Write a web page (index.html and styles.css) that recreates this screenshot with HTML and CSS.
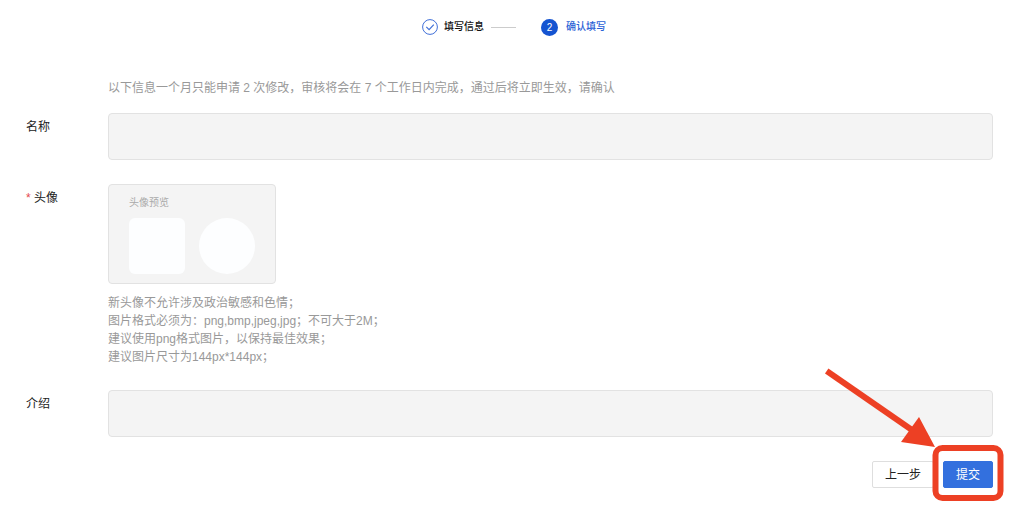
FILE: index.html
```html
<!DOCTYPE html>
<html lang="zh-CN">
<head>
<meta charset="utf-8">
<meta name="viewport" content="width=device-width, initial-scale=1">
<title>确认填写</title>
<link rel="stylesheet" href="styles.css">
</head>
<body>
<main class="page">
  <ol class="steps">
    <li class="step">
      <svg class="step-icon" viewBox="0 0 16 16" aria-hidden="true">
        <circle cx="8" cy="8" r="7.4" fill="#fff" stroke="#3f6fd8" stroke-width="1"/>
        <path d="M4.3 7.9 7.1 10.6 11.8 5.6" fill="none" stroke="#3f6fd8" stroke-width="1.2"/>
      </svg>
      <span>填写信息</span>
    </li>
    <li class="step-line" aria-hidden="true"></li>
    <li class="step step-active" aria-current="step">
      <span class="step-number">2</span>
      <span>确认填写</span>
    </li>
  </ol>

  <form class="form">
    <p class="notice">以下信息一个月只能申请 2 次修改，审核将会在 7 个工作日内完成，通过后将立即生效，请确认</p>

    <div class="row">
      <label class="label" for="name">名称</label>
      <input class="field" id="name" type="text" readonly>
    </div>

    <div class="row">
      <div class="label"><span class="required">*</span> 头像</div>
      <div>
        <div class="preview">
          <div class="preview-title">头像预览</div>
          <div class="preview-shapes">
            <div class="avatar"></div>
            <div class="avatar avatar-round"></div>
          </div>
        </div>
        <div class="hints">
          <p>新头像不允许涉及政治敏感和色情；</p>
          <p>图片格式必须为：png,bmp,jpeg,jpg；不可大于2M；</p>
          <p>建议使用png格式图片，以保持最佳效果；</p>
          <p>建议图片尺寸为144px*144px；</p>
        </div>
      </div>
    </div>

    <div class="row">
      <label class="label" for="intro">介绍</label>
      <input class="field" id="intro" type="text" readonly>
    </div>

    <div class="actions">
      <button class="button" type="button">上一步</button>
      <button class="button button-primary" type="submit">提交</button>
      <svg class="callout" viewBox="0 0 185 140" aria-hidden="true">
        <path d="M6.7 6 92 65" fill="none" stroke="#ed4024" stroke-width="6"/>
        <path d="M99 52 81 77 115 82Z" fill="#ed4024"/>
        <rect x="115.5" y="83" width="65" height="50" rx="7" fill="none" stroke="#ed4024" stroke-width="6"/>
      </svg>
    </div>
  </form>
</main>
</body>
</html>
```
FILE: styles.css
```css
* {
  box-sizing: border-box;
}

body {
  margin: 0;
  background: #fff;
  color: #222;
  font: 12px/18px "Liberation Sans", "Noto Sans CJK SC", sans-serif;
}

p {
  margin: 0;
}

.page {
  padding: 18px 31px 20px 26px;
}

.steps {
  display: flex;
  justify-content: center;
  align-items: center;
  margin: 0;
  padding: 0 0 0 9px;
  list-style: none;
  font-size: 10px;
}

.step {
  display: flex;
  align-items: center;
  gap: 6px;
  font-weight: 500;
  color: #111;
}

.step-icon {
  width: 16px;
  height: 16px;
}

.step-line {
  width: 25px;
  height: 1px;
  margin: 0 25px 0 7px;
  background: #ccc;
}

.step-active {
  gap: 8px;
  color: #2b62d6;
}

.step-number {
  width: 17px;
  height: 17px;
  border-radius: 50%;
  background: #1554d1;
  color: #fff;
  line-height: 17px;
  text-align: center;
}

.form {
  display: flex;
  flex-direction: column;
  margin-top: 43px;
}

.notice {
  margin: 0 0 16px 82px;
  color: #999;
}

.row {
  display: grid;
  grid-template-columns: 82px minmax(0, 1fr);
  margin-bottom: 24px;
}

.label {
  padding-top: 5px;
}

.required {
  color: #e5484d;
}

.field {
  width: 100%;
  height: 47px;
  padding: 0 12px;
  border: 1px solid #e2e2e2;
  border-radius: 4px;
  background: #f4f4f4;
  color: inherit;
  font: inherit;
  outline: none;
}

.preview {
  width: 168px;
  height: 100px;
  padding: 9px 20px;
  border: 1px solid #e2e2e2;
  border-radius: 4px;
  background: #f4f4f4;
}

.preview-title {
  color: #aaa;
  font-size: 10px;
}

.preview-shapes {
  display: flex;
  gap: 14px;
  margin-top: 6px;
}

.avatar {
  width: 56px;
  height: 56px;
  border-radius: 6px;
  background: #fdfeff;
}

.avatar-round {
  border-radius: 50%;
}

.hints {
  margin-top: 10px;
  color: #999;
}

.actions {
  position: relative;
  display: flex;
  justify-content: flex-end;
  gap: 9px;
}

.button {
  height: 27px;
  padding: 0 12px;
  border: 1px solid #dedede;
  border-radius: 2px;
  background: #fff;
  color: #222;
  font: inherit;
}

.button-primary {
  border-color: #3370de;
  background: #3370de;
  color: #fff;
}

.callout {
  position: absolute;
  right: -12px;
  bottom: -17px;
  width: 185px;
  height: 140px;
  pointer-events: none;
}
```
